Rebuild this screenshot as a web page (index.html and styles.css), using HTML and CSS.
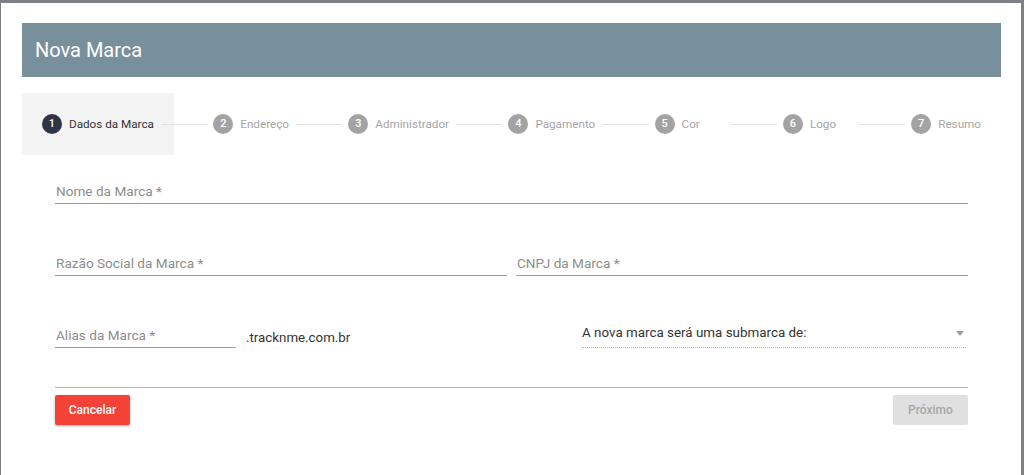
FILE: index.html
```html
<!DOCTYPE html>
<html lang="pt-BR">
<head>
<meta charset="utf-8">
<title>Nova Marca</title>
<link rel="stylesheet" href="styles.css">
</head>
<body>
<div class="dialog">
  <div class="header"><h1 class="title">Nova Marca</h1></div>

  <div class="stepper">
    <div class="step active"><span class="num">1</span><span class="label">Dados da Marca</span></div>
    <div class="line"></div>
    <div class="step"><span class="num">2</span><span class="label">Endereço</span></div>
    <div class="line"></div>
    <div class="step"><span class="num">3</span><span class="label">Administrador</span></div>
    <div class="line"></div>
    <div class="step"><span class="num">4</span><span class="label">Pagamento</span></div>
    <div class="line"></div>
    <div class="step"><span class="num">5</span><span class="label">Cor</span></div>
    <div class="line"></div>
    <div class="step"><span class="num">6</span><span class="label">Logo</span></div>
    <div class="line"></div>
    <div class="step"><span class="num">7</span><span class="label">Resumo</span></div>
  </div>

  <div class="form">
    <div class="row row-first">
      <div class="field field-full"><span class="placeholder">Nome da Marca *</span></div>
    </div>
    <div class="row">
      <div class="field field-half"><span class="placeholder">Razão Social da Marca *</span></div>
      <div class="field field-half"><span class="placeholder">CNPJ da Marca *</span></div>
    </div>
    <div class="row">
      <div class="field field-alias"><span class="placeholder">Alias da Marca *</span></div>
      <span class="suffix">.tracknme.com.br</span>
      <div class="select">
        <span class="select-text">A nova marca será uma submarca de:</span>
        <span class="arrow"></span>
      </div>
    </div>
    <div class="divider"></div>
    <div class="actions">
      <button class="btn btn-cancel">Cancelar</button>
      <button class="btn btn-next" disabled>Próximo</button>
    </div>
  </div>
</div>
</body>
</html>
```

FILE: styles.css
```css
html, body {
  margin: 0;
  padding: 0;
  height: 100%;
  overflow: hidden;
}
body {
  background: #7d8183;
  font-family: Roboto, "Liberation Sans", Arial, sans-serif;
  padding: 3px 3px 0 1px;
  box-sizing: border-box;
}
.dialog {
  background: #fff;
  height: 100%;
  padding: 20px 20px 0 21px;
  box-sizing: border-box;
}
.header {
  background: #78909c;
  height: 54px;
  display: flex;
  align-items: center;
  padding-left: 13px;
}
.title {
  margin: 0;
  color: #fff;
  font-size: 20px;
  font-weight: 400;
  line-height: 24px;
}
.stepper {
  margin-top: 16px;
  height: 62px;
  display: flex;
  align-items: center;
}
.step {
  height: 62px;
  padding: 0 20px;
  display: flex;
  align-items: center;
  flex: none;
}
.step.active {
  background: #f3f3f3;
}
.num {
  width: 20px;
  height: 20px;
  border-radius: 50%;
  background: #a3a3a3;
  color: #fff;
  font-size: 11px;
  line-height: 20px;
  text-align: center;
  font-weight: 500;
}
.active .num {
  background: #2e3548;
}
.label {
  margin-left: 7px;
  min-width: 42px;
  font-size: 11.7px;
  color: #a6a6a6;
}
.active .label {
  color: #333;
}
.line {
  flex: 1 1 auto;
  min-width: 28px;
  height: 0;
  border-top: 1px solid #e0e0e0;
  margin: 0 -14px 0 -13px;
  position: relative;
}
.form {
  padding: 0 33px;
}
.row {
  display: flex;
  align-items: flex-end;
  height: 49px;
  margin-top: 23px;
}
.row-first {
  margin-top: 0;
}
.field {
  border-bottom: 1px solid #9e9e9e;
  padding: 0 0 4px 1px;
  line-height: 16px;
  box-sizing: border-box;
}
.field-full {
  width: 100%;
}
.field-half {
  flex: 1 1 0;
}
.field-half + .field-half {
  margin-left: 9px;
}
.field-alias {
  width: 181px;
  flex: none;
}
.placeholder {
  font-size: 13.6px;
  color: #8e8e8e;
}
.suffix {
  margin-left: 10px;
  font-size: 13.3px;
  color: #333;
  line-height: 16px;
  padding-bottom: 2px;
}
.select {
  margin-left: auto;
  margin-right: 2px;
  width: 384px;
  display: flex;
  align-items: center;
  justify-content: space-between;
  border-bottom: 1px dotted #b5b5b5;
  padding-bottom: 6px;
  line-height: 16px;
}
.select-text {
  font-size: 13.4px;
  color: #333;
}
.arrow {
  width: 0;
  height: 0;
  border-left: 4px solid transparent;
  border-right: 4px solid transparent;
  border-top: 5px solid #9e9e9e;
  margin-right: 2px;
  margin-top: 1px;
}
.divider {
  margin-top: 39px;
  height: 1px;
  background: #b3b3b3;
}
.actions {
  margin-top: 7px;
  display: flex;
  justify-content: space-between;
}
.btn {
  width: 75px;
  height: 30px;
  border: none;
  border-radius: 2px;
  font-family: Roboto, "Liberation Sans", Arial, sans-serif;
  font-size: 12px;
  font-weight: 500;
  padding: 0;
}
.btn-cancel {
  background: #f44336;
  color: #fff;
  box-shadow: 0 1px 3px rgba(0, 0, 0, 0.3);
}
.btn-next {
  background: #e0e0e0;
  color: #a8a8a8;
}
```
